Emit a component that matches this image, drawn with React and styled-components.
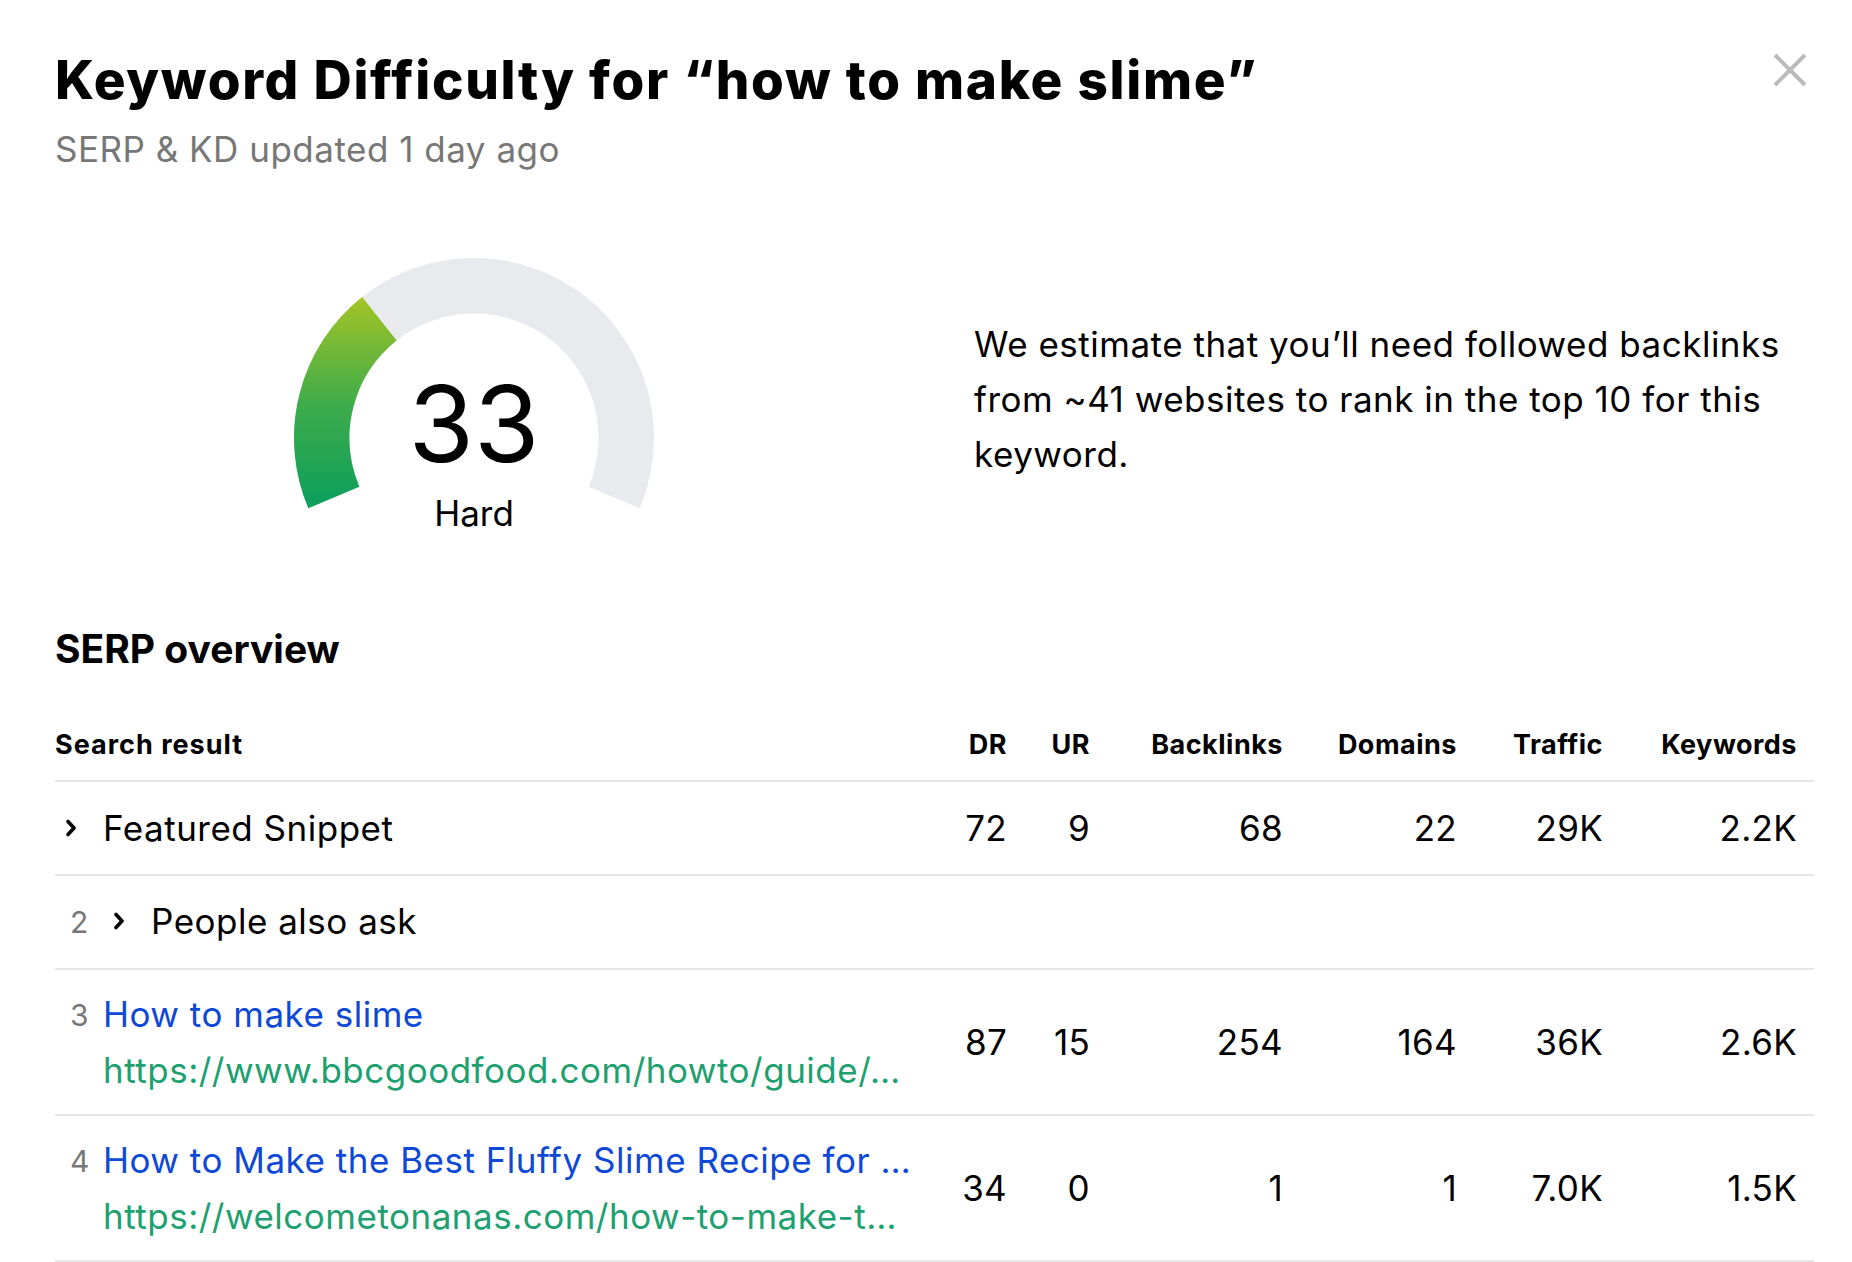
import React from 'react';
import styled, { createGlobalStyle } from 'styled-components';

const GlobalStyle = createGlobalStyle`
  html, body {
    margin: 0;
    padding: 0;
    background: #fff;
  }
  body {
    font-family: Inter, "Noto Sans", sans-serif;
    color: #000;
  }
`;

const Page = styled.div`
  padding: 48px 38px 0 55px;
`;

const Header = styled.header`
  display: flex;
  justify-content: space-between;
  align-items: flex-start;
`;

const Title = styled.h1`
  margin: 0;
  font-size: 53px;
  line-height: 64px;
  font-weight: 800;
  letter-spacing: 1.7px;
`;

const Subtitle = styled.div`
  margin-top: 17px;
  font-size: 35px;
  line-height: 40px;
  letter-spacing: 0.5px;
  color: #777;
`;

const CloseButton = styled.button`
  display: flex;
  margin: 5px 7px 0 0;
  padding: 0;
  width: 34px;
  height: 34px;
  border: 0;
  background: none;
  cursor: pointer;
`;

const Summary = styled.section`
  display: grid;
  grid-template-columns: 838px 1fr;
  column-gap: 81px;
  align-items: start;
  margin-top: 88px;
`;

const Gauge = styled.div`
  display: grid;
  justify-items: center;
  & > * {
    grid-area: 1 / 1;
  }
`;

const GaugeLabel = styled.div`
  padding-top: 114px;
  text-align: center;
`;

const Score = styled.div`
  font-size: 106px;
  line-height: 106px;
`;

const Grade = styled.div`
  margin-top: 16px;
  font-size: 35px;
  line-height: 40px;
`;

const Estimate = styled.p`
  margin: 60px 0 0;
  max-width: 830px;
  font-size: 35px;
  line-height: 55px;
  letter-spacing: 0.5px;
`;

const SectionTitle = styled.h2`
  margin: 92px 0 0;
  font-size: 39px;
  line-height: 48px;
  font-weight: 700;
`;

const Table = styled.div`
  margin-top: 55px;
`;

const Row = styled.div`
  display: grid;
  grid-template-columns: 1fr 90px 83px 193px 174px 146px 194px;
  align-items: center;
  padding-right: 17px;
  border-bottom: 2px solid #e6e6e6;
  box-sizing: border-box;
`;

const HeadRow = styled(Row)`
  padding-bottom: 18px;
`;

const BodyRow = styled(Row)`
  min-height: 94px;
  padding-top: 16px;
  padding-bottom: 16px;
`;

const HeadCell = styled.div`
  font-size: 27px;
  line-height: 34px;
  font-weight: 700;
  letter-spacing: ${(p) => (p.$left ? '1px' : '0.5px')};
  text-align: ${(p) => (p.$left ? 'left' : 'right')};
`;

const Num = styled.div`
  font-size: 35px;
  line-height: 56px;
  letter-spacing: 0.3px;
  text-align: right;
`;

const NameCell = styled.div`
  display: flex;
  align-items: flex-start;
  min-width: 0;
`;

const Rank = styled.span`
  flex: 0 0 48px;
  box-sizing: border-box;
  padding-left: 15px;
  font-size: 30px;
  line-height: 58px;
  color: #777;
`;

const Expander = styled.span`
  display: flex;
  flex: 0 0 32px;
  height: 56px;
  align-items: center;
  justify-content: center;
  margin-right: 16px;
`;

const ResultText = styled.div`
  min-width: 0;
  font-size: 35px;
  line-height: 56px;
  letter-spacing: 0.5px;
`;

const Line = styled.div`
  overflow: hidden;
  white-space: nowrap;
  text-overflow: ellipsis;
  color: ${(p) => p.$color || '#000'};
`;

const CX = 181;
const CY = 181;
const R = 152.25;

const pt = (deg) => {
  const a = (deg * Math.PI) / 180;
  return `${(CX + R * Math.cos(a)).toFixed(2)} ${(CY + R * Math.sin(a)).toFixed(2)}`;
};

const arc = (from, to) =>
  `M ${pt(from)} A ${R} ${R} 0 ${to - from > 180 ? 1 : 0} 1 ${pt(to)}`;

const GaugeArc = ({ value }) => {
  const start = 157;
  const span = 226;
  return (
    <svg width="362" height="256" viewBox="0 0 362 256">
      <defs>
        <linearGradient id="kd" gradientUnits="userSpaceOnUse" x1="0" y1="252" x2="0" y2="40">
          <stop offset="0" stopColor="#0a9e5e" />
          <stop offset="0.5" stopColor="#3fac4a" />
          <stop offset="1" stopColor="#a4c425" />
        </linearGradient>
      </defs>
      <path d={arc(start, start + span)} fill="none" stroke="#e8eaed" strokeWidth="55.5" />
      <path d={arc(start, start + (span * value) / 100)} fill="none" stroke="url(#kd)" strokeWidth="55.5" />
    </svg>
  );
};

const Chevron = () => (
  <svg width="12" height="18" viewBox="0 0 12 18">
    <path d="M3 2.5 L9 9 L3 15.5" fill="none" stroke="#000" strokeWidth="3.6" strokeLinecap="round" strokeLinejoin="round" />
  </svg>
);

const CloseIcon = () => (
  <svg width="34" height="34" viewBox="0 0 34 34">
    <path d="M2 2 L32 32 M32 2 L2 32" stroke="#bbb" strokeWidth="4" />
  </svg>
);

const columns = ['DR', 'UR', 'Backlinks', 'Domains', 'Traffic', 'Keywords'];

const rows = [
  { expand: true, title: 'Featured Snippet', stats: ['72', '9', '68', '22', '29K', '2.2K'] },
  { rank: 2, expand: true, title: 'People also ask' },
  {
    rank: 3,
    title: 'How to make slime',
    url: 'https://www.bbcgoodfood.com/howto/guide/…',
    stats: ['87', '15', '254', '164', '36K', '2.6K'],
  },
  {
    rank: 4,
    title: 'How to Make the Best Fluffy Slime Recipe for …',
    url: 'https://welcometonanas.com/how-to-make-t…',
    stats: ['34', '0', '1', '1', '7.0K', '1.5K'],
  },
];

const App = () => (
  <Page>
    <GlobalStyle />
    <Header>
      <div>
        <Title>Keyword Difficulty for “how to make slime”</Title>
        <Subtitle>SERP &amp; KD updated 1 day ago</Subtitle>
      </div>
      <CloseButton aria-label="Close">
        <CloseIcon />
      </CloseButton>
    </Header>

    <Summary>
      <Gauge>
        <GaugeArc value={33} />
        <GaugeLabel>
          <Score>33</Score>
          <Grade>Hard</Grade>
        </GaugeLabel>
      </Gauge>
      <Estimate>
        We estimate that you’ll need followed backlinks from ~41 websites to rank in the top 10 for this keyword.
      </Estimate>
    </Summary>

    <SectionTitle>SERP overview</SectionTitle>
    <Table>
      <HeadRow>
        <HeadCell $left>Search result</HeadCell>
        {columns.map((c) => (
          <HeadCell key={c}>{c}</HeadCell>
        ))}
      </HeadRow>
      {rows.map((r) => (
        <BodyRow key={r.title}>
          <NameCell>
            {r.rank && <Rank>{r.rank}</Rank>}
            {r.expand && (
              <Expander>
                <Chevron />
              </Expander>
            )}
            <ResultText>
              <Line $color={r.url ? '#0e48d6' : '#000'}>{r.title}</Line>
              {r.url && <Line $color="#20a070">{r.url}</Line>}
            </ResultText>
          </NameCell>
          {(r.stats || []).map((s, i) => (
            <Num key={columns[i]}>{s}</Num>
          ))}
        </BodyRow>
      ))}
    </Table>
  </Page>
);

export default App;
